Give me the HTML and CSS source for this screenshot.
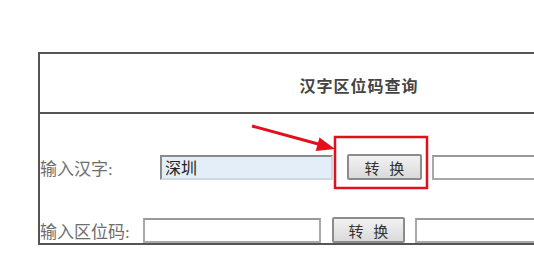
FILE: index.html
```html
<!DOCTYPE html>
<html lang="zh-CN">
<head>
    <meta charset="UTF-8">
    <title>汉字区位码查询</title>
    <link rel="stylesheet" href="styles.css">
</head>
<body>
    <div class="panel">
        <div class="panel-head">
            <h1>汉字区位码查询</h1>
        </div>
        <div class="panel-body">
            <div class="row row-hanzi">
                <label class="label" for="hanzi">输入汉字:</label>
                <input type="text" id="hanzi" class="field field-active" value="深圳">
                <button type="button" class="convert-btn">转 换</button>
                <input type="text" class="field field-result">
            </div>
            <div class="row row-code">
                <label class="label" for="code">输入区位码:</label>
                <input type="text" id="code" class="field">
                <button type="button" class="convert-btn">转 换</button>
                <input type="text" class="field field-result">
            </div>
        </div>
    </div>

    <!-- annotation layer -->
    <svg class="markup" width="534" height="263" viewBox="0 0 534 263">
        <line x1="252" y1="126" x2="320" y2="144.5" stroke="#e2101c" stroke-width="3"/>
        <polygon points="335,149 319.5,137.5 315.7,151" fill="#e2101c"/>
        <rect x="335" y="137" width="92" height="51" fill="none" stroke="#e2101c" stroke-width="2.5"/>
    </svg>
</body>
</html>
```

FILE: styles.css
```css
* {
    margin: 0;
    padding: 0;
    box-sizing: border-box;
}

body {
    font-family: 'Liberation Serif', 'Noto Sans CJK SC', serif;
    background: white;
    width: 534px;
    height: 263px;
    overflow: hidden;
    position: relative;
}

.panel {
    width: 642px;
    margin: 52px 0 0 38px;
    border: 2px solid #555;
    overflow: hidden;
}

.panel-head {
    height: 60px;
    border-bottom: 2px solid #555;
    display: flex;
    align-items: center;
    justify-content: center;
    padding-top: 4px;
}

.panel-head h1 {
    font-size: 16px;
    font-weight: 700;
    color: #444;
    letter-spacing: 1px;
}

.panel-body {
    height: 129px;
    padding-top: 40px;
    display: flex;
    flex-direction: column;
    gap: 37px;
}

.row {
    display: flex;
    align-items: center;
    height: 26px;
}

.label {
    font-size: 17px;
    color: #6e6e6e;
    flex-shrink: 0;
}

.row-hanzi .label { width: 120px; }
.row-code .label { width: 103px; }

.field {
    height: 25px;
    border: 2px solid #a8a8a8;
    border-top-color: #999;
    background: white;
    font-family: inherit;
    font-size: 16px;
    color: #222;
    padding: 0 3px;
    outline: none;
    flex-shrink: 0;
}

.field-active {
    background: #e3eef9;
    border-color: #d0d8e0;
    border-top-color: #8a8a8a;
    border-left-color: #8a8a8a;
    width: 173px;
}

.row-code .field { width: 178px; }
.field-result { width: 200px; }

.convert-btn {
    height: 26px;
    border: 2px solid #8c8c8c;
    border-radius: 2px;
    background: linear-gradient(#f2f2f2, #dadada);
    font-family: 'Liberation Serif', 'Noto Sans CJK SC', serif;
    font-size: 15px;
    color: #333;
    word-spacing: 6px;
    flex-shrink: 0;
}

.row-hanzi .convert-btn {
    width: 75px;
    margin: 0 10px 0 14px;
}

.row-code .convert-btn {
    width: 73px;
    margin: 0 10px 0 11px;
}

.markup {
    position: absolute;
    top: 0;
    left: 0;
    pointer-events: none;
}
```
